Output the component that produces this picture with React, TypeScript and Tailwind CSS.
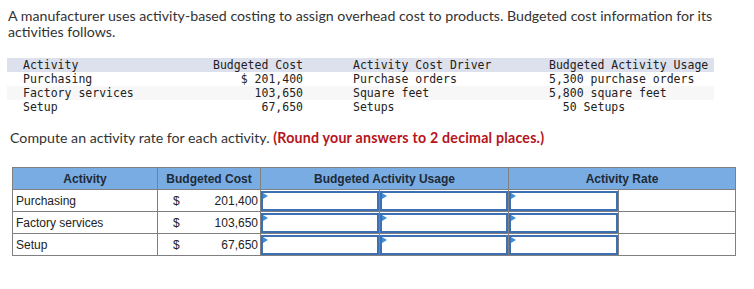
import React from "react";

const mono = [
  { a: "Activity", b: "Budgeted Cost", c: "Activity Cost Driver", d: "Budgeted Activity Usage", bg: "bg-[#dde1ed]" },
  { a: "Purchasing", b: "$ 201,400", c: "Purchase orders", d: "5,300 purchase orders", bg: "" },
  { a: "Factory services", b: "103,650", c: "Square feet", d: "5,800 square feet", bg: "bg-[#f7f7f7]" },
  { a: "Setup", b: "67,650", c: "Setups", d: "  50 Setups", bg: "" },
];

const rows = [
  { name: "Purchasing", cost: "201,400" },
  { name: "Factory services", cost: "103,650" },
  { name: "Setup", cost: "67,650" },
];

const Input: React.FC = () => (
  <div className="relative h-[20px] border-2 border-[#3d6fb5] bg-white">
    <div className="absolute left-0 top-0 h-0 w-0 border-y-[3px] border-l-[5px] border-y-transparent border-l-[#3d8fd8]" />
  </div>
);

const App: React.FC = () => {
  return (
    <div className="w-[754px] h-[289px] bg-white font-['Lato','Liberation_Sans',sans-serif] text-[#333]">
      <p className="pl-[8px] pt-[8px] text-[14.2px] leading-[16px]">
        A manufacturer uses activity-based costing to assign overhead cost to products. Budgeted cost information for its
        activities follows.
      </p>

      <div className="mt-[18px] ml-[7px] w-[707px] font-['DejaVu_Sans_Mono',monospace] text-[11.5px] leading-[14px] text-[#222]">
        {mono.map((r, i) => (
          <div key={i} className={`flex h-[14px] whitespace-pre ${r.bg}`}>
            <span className="w-[190px] pl-[16px]">{r.a}</span>
            <span className="w-[106px] text-right">{r.b}</span>
            <span className="w-[196px] pl-[50px]">{r.c}</span>
            <span className="pl-[50px]">{r.d}</span>
          </div>
        ))}
      </div>

      <p className="mt-[16px] pl-[10px] text-[14.2px] leading-[16px]">
        Compute an activity rate for each activity.{" "}
        <span className="font-bold tracking-[0.22px] text-[#b5141b]">(Round your answers to 2 decimal places.)</span>
      </p>

      <table className="mt-[21px] ml-[12px] w-[723px] table-fixed border-collapse font-['Liberation_Sans',Arial,sans-serif] text-[12px] text-[#222]">
        <colgroup>
          <col className="w-[145px]" />
          <col className="w-[103px]" />
          <col className="w-[119px]" />
          <col className="w-[129px]" />
          <col className="w-[110px]" />
          <col className="w-[117px]" />
        </colgroup>
        <thead>
          <tr className="h-[22px] bg-[#79ace2] font-bold text-[#1e2a38]">
            <th className="border border-[#808080] p-0 text-center">Activity</th>
            <th className="border border-[#808080] p-0 text-center">Budgeted Cost</th>
            <th colSpan={2} className="border border-[#808080] p-0 text-center">Budgeted Activity Usage</th>
            <th colSpan={2} className="border border-[#808080] p-0 text-center">Activity Rate</th>
          </tr>
        </thead>
        <tbody>
          {rows.map((r) => (
            <tr key={r.name} className="h-[22px]">
              <td className="border border-[#808080] px-[3px] py-0">{r.name}</td>
              <td className="border border-[#808080] py-0 pl-[15px] pr-[2px]">
                <div className="flex justify-between">
                  <span>$</span>
                  <span>{r.cost}</span>
                </div>
              </td>
              <td className="border border-[#808080] p-0">
                <Input />
              </td>
              <td className="border border-[#808080] p-0">
                <Input />
              </td>
              <td className="border border-[#808080] p-0">
                <Input />
              </td>
              <td className="border border-[#808080] p-0" />
            </tr>
          ))}
        </tbody>
      </table>
    </div>
  );
};

export default App;
